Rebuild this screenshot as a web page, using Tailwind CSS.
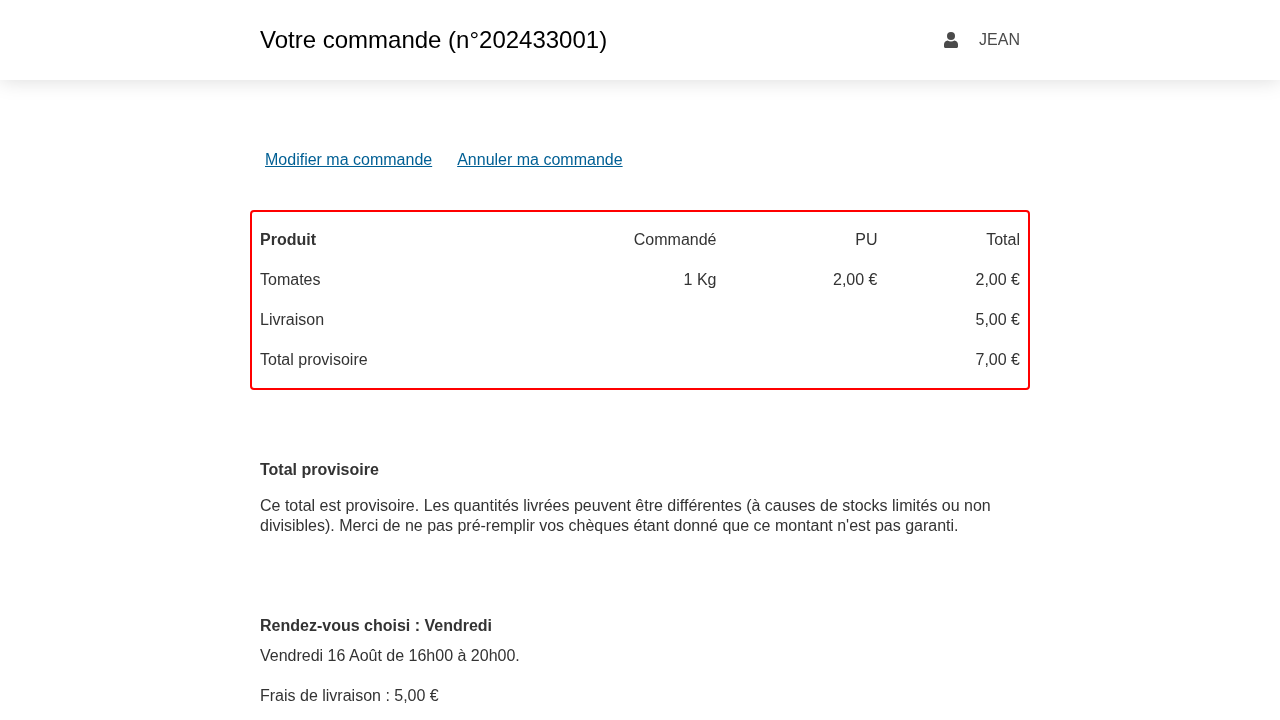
<!DOCTYPE html>
<html lang="fr">
<head>
    <meta charset="UTF-8">
    <meta name="viewport" content="width=device-width, initial-scale=1.0">
    <title>Votre commande</title>
    <script src="https://cdn.jsdelivr.net/npm/@tailwindcss/browser@4"></script>
</head>
<body class="bg-white text-[#333333] font-['Liberation_Sans',Arial,sans-serif] text-base leading-5 h-screen overflow-hidden">
    <!-- Header -->
    <header class="h-20 bg-white shadow-[0_0_20px_rgba(0,0,0,0.15)] relative">
        <div class="w-[780px] mx-auto px-2.5 h-full flex items-center justify-between will-change-transform">
            <h1 class="text-2xl leading-8 text-black">Votre commande (n°202433001)</h1>
            <div class="flex items-center text-[#4a4a4a]">
                <svg class="w-3.5 h-4 mr-[21px]" viewBox="0 0 14 16" fill="#4a4a4a">
                    <circle cx="7" cy="4" r="4"/>
                    <path d="M3.6 8.6C4.6 9.2 5.8 9.5 7 9.5s2.4-.3 3.400-.9C12.500 8.800 14 10.500 14 12.600V14.500C14 15.300 13.300 16 12.500 16H1.500C.7 16 0 15.300 0 14.500V12.600C0 10.500 1.500 8.800 3.600 8.600Z"/>
                </svg>
                <span>JEAN</span>
            </div>
        </div>
    </header>

    <main class="w-[780px] mx-auto will-change-transform">
        <!-- Actions -->
        <div class="pt-[70px] px-[15px] flex gap-[25px] text-[#005f94]">
            <a href="#" class="underline">Modifier ma commande</a>
            <a href="#" class="underline">Annuler ma commande</a>
        </div>

        <!-- Recap -->
        <div class="mt-10 border-2 border-[#ff0000] rounded-[4px] py-2">
            <div class="grid grid-cols-[312.5px_160px_161px_142.5px] auto-rows-[40px] items-center">
                <div class="px-2 font-bold">Produit</div>
                <div class="px-2 text-right">Commandé</div>
                <div class="px-2 text-right">PU</div>
                <div class="px-2 text-right">Total</div>

                <div class="px-2">Tomates</div>
                <div class="px-2 text-right">1 Kg</div>
                <div class="px-2 text-right">2,00 €</div>
                <div class="px-2 text-right">2,00 €</div>

                <div class="px-2">Livraison</div>
                <div></div>
                <div></div>
                <div class="px-2 text-right">5,00 €</div>

                <div class="px-2">Total provisoire</div>
                <div></div>
                <div></div>
                <div class="px-2 text-right">7,00 €</div>
            </div>
        </div>

        <section class="mt-[70px] px-2.5">
            <h2 class="font-bold">Total provisoire</h2>
            <p class="mt-4">Ce total est provisoire. Les quantités livrées peuvent être différentes (à causes de stocks limités ou non divisibles). Merci de ne pas pré-remplir vos chèques étant donné que ce montant n'est pas garanti.</p>
        </section>

        <section class="mt-[80px] px-2.5">
            <h2 class="font-bold">Rendez-vous choisi : Vendredi</h2>
            <p class="mt-2.5">Vendredi 16 Août de 16h00 à 20h00.</p>
            <p class="mt-5">Frais de livraison : 5,00 €</p>
        </section>
    </main>
</body>
</html>
